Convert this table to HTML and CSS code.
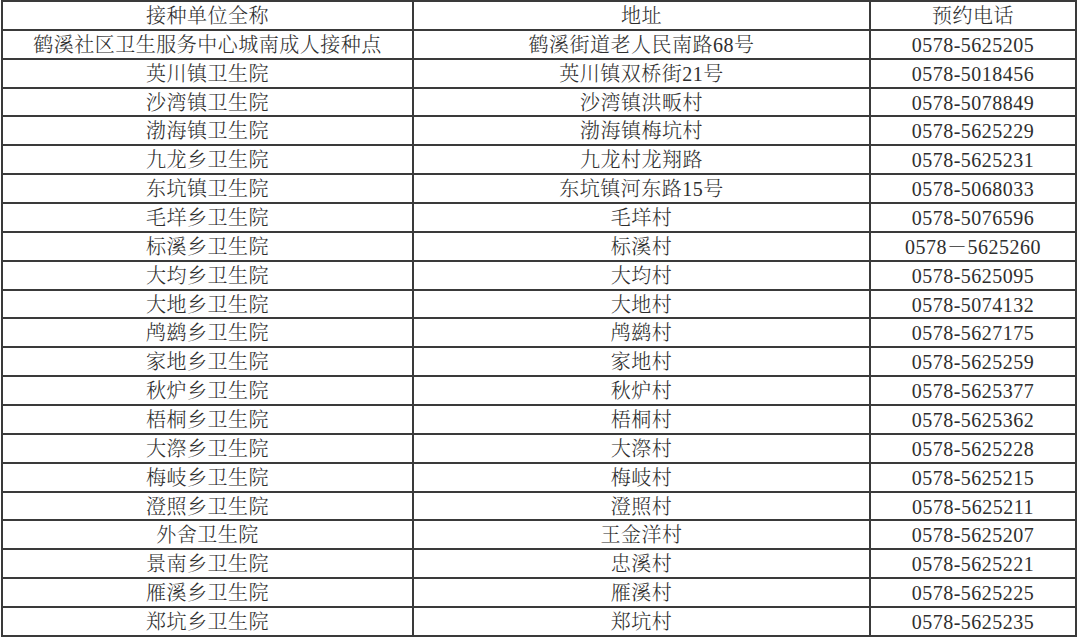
FILE: index.html
```html
<!DOCTYPE html>
<html lang="zh-CN">
<head>
<meta charset="utf-8">
<title>接种单位</title>
<link rel="stylesheet" href="styles.css">
</head>
<body>
<div class="sites">
  <div class="cell head">接种单位全称</div><div class="cell head">地址</div><div class="cell head">预约电话</div>
  <div class="cell">鹤溪社区卫生服务中心城南成人接种点</div><div class="cell">鹤溪街道老人民南路68号</div><div class="cell">0578-5625205</div>
  <div class="cell">英川镇卫生院</div><div class="cell">英川镇双桥街21号</div><div class="cell">0578-5018456</div>
  <div class="cell">沙湾镇卫生院</div><div class="cell">沙湾镇洪畈村</div><div class="cell">0578-5078849</div>
  <div class="cell">渤海镇卫生院</div><div class="cell">渤海镇梅坑村</div><div class="cell">0578-5625229</div>
  <div class="cell">九龙乡卫生院</div><div class="cell">九龙村龙翔路</div><div class="cell">0578-5625231</div>
  <div class="cell">东坑镇卫生院</div><div class="cell">东坑镇河东路15号</div><div class="cell">0578-5068033</div>
  <div class="cell">毛垟乡卫生院</div><div class="cell">毛垟村</div><div class="cell">0578-5076596</div>
  <div class="cell">标溪乡卫生院</div><div class="cell">标溪村</div><div class="cell">0578－5625260</div>
  <div class="cell">大均乡卫生院</div><div class="cell">大均村</div><div class="cell">0578-5625095</div>
  <div class="cell">大地乡卫生院</div><div class="cell">大地村</div><div class="cell">0578-5074132</div>
  <div class="cell">鸬鹚乡卫生院</div><div class="cell">鸬鹚村</div><div class="cell">0578-5627175</div>
  <div class="cell">家地乡卫生院</div><div class="cell">家地村</div><div class="cell">0578-5625259</div>
  <div class="cell">秋炉乡卫生院</div><div class="cell">秋炉村</div><div class="cell">0578-5625377</div>
  <div class="cell">梧桐乡卫生院</div><div class="cell">梧桐村</div><div class="cell">0578-5625362</div>
  <div class="cell">大漈乡卫生院</div><div class="cell">大漈村</div><div class="cell">0578-5625228</div>
  <div class="cell">梅岐乡卫生院</div><div class="cell">梅岐村</div><div class="cell">0578-5625215</div>
  <div class="cell">澄照乡卫生院</div><div class="cell">澄照村</div><div class="cell">0578-5625211</div>
  <div class="cell">外舍卫生院</div><div class="cell">王金洋村</div><div class="cell">0578-5625207</div>
  <div class="cell">景南乡卫生院</div><div class="cell">忠溪村</div><div class="cell">0578-5625221</div>
  <div class="cell">雁溪乡卫生院</div><div class="cell">雁溪村</div><div class="cell">0578-5625225</div>
  <div class="cell">郑坑乡卫生院</div><div class="cell">郑坑村</div><div class="cell">0578-5625235</div>
</div>
</body>
</html>
```

FILE: styles.css
```css
html, body {
  margin: 0;
  padding: 0;
  background: #ffffff;
}

body {
  font-family: "Liberation Serif", "Noto Serif CJK SC", "Noto Sans CJK SC", serif;
  color: #2e2e2e;
}

.sites {
  display: grid;
  grid-template-columns: 411px 457px 206px;
  grid-auto-rows: 28.86px;
  width: max-content;
  margin-left: 1px;
  border-left: 2px solid #3a3a3a;
  border-top: 2px solid #3a3a3a;
}

.cell {
  box-sizing: border-box;
  display: flex;
  align-items: center;
  justify-content: center;
  border-right: 2px solid #3a3a3a;
  border-bottom: 2px solid #3a3a3a;
  font-size: 20px;
  font-weight: 300;
  letter-spacing: 0.5px;
  line-height: 1;
  white-space: nowrap;
  overflow: hidden;
  padding-top: 1px;
}
```
